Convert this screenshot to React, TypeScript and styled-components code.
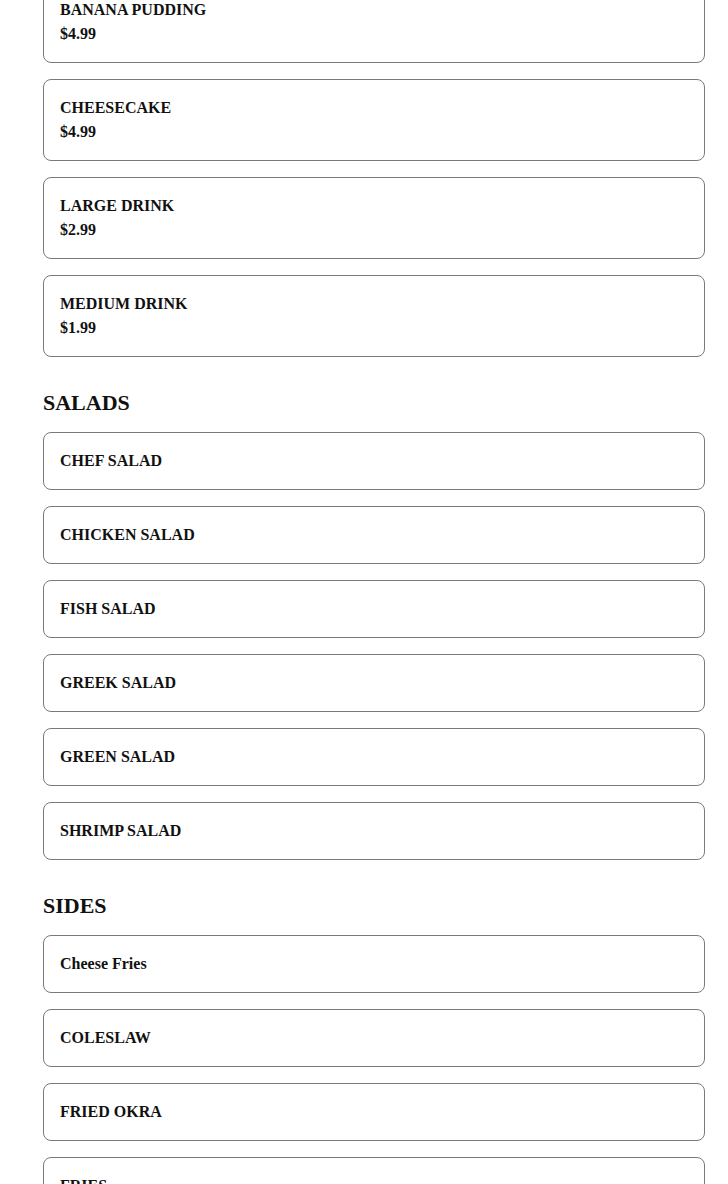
import styled, { createGlobalStyle } from 'styled-components';

type MenuItem = {
  name: string;
  price?: string;
};

type MenuSection = {
  title?: string;
  items: MenuItem[];
};

const MENU: MenuSection[] = [
  {
    items: [
      { name: 'BANANA PUDDING', price: '$4.99' },
      { name: 'CHEESECAKE', price: '$4.99' },
      { name: 'LARGE DRINK', price: '$2.99' },
      { name: 'MEDIUM DRINK', price: '$1.99' },
    ],
  },
  {
    title: 'SALADS',
    items: [
      { name: 'CHEF SALAD' },
      { name: 'CHICKEN SALAD' },
      { name: 'FISH SALAD' },
      { name: 'GREEK SALAD' },
      { name: 'GREEN SALAD' },
      { name: 'SHRIMP SALAD' },
    ],
  },
  {
    title: 'SIDES',
    items: [
      { name: 'Cheese Fries' },
      { name: 'COLESLAW' },
      { name: 'FRIED OKRA' },
      { name: 'FRIES' },
    ],
  },
];

const GlobalStyle = createGlobalStyle`
  html, body {
    margin: 0;
    padding: 0;
    background: #ffffff;
  }
  body {
    font-family: "Liberation Serif", "Times New Roman", serif;
    color: #111111;
    overflow: hidden;
  }
`;

export default function App() {
  return (
    <>
      <GlobalStyle />
      <Page>
        {MENU.map((section, i) => (
          <Section key={i}>
            {section.title && <SectionTitle>{section.title}</SectionTitle>}
            <ItemList>
              {section.items.map(item => (
                <ItemCard key={item.name}>
                  <ItemName>{item.name}</ItemName>
                  {item.price && <ItemPrice>{item.price}</ItemPrice>}
                </ItemCard>
              ))}
            </ItemList>
          </Section>
        ))}
      </Page>
    </>
  );
}

const Page = styled.main`
  display: flex;
  flex-direction: column;
  gap: 16px;
  padding: 0 23px 40px 43px;
  margin-top: -19px;
`;

const Section = styled.section`
  display: flex;
  flex-direction: column;
  gap: 11px;

  & + & {
    margin-top: 12px;
  }
`;

const SectionTitle = styled.h2`
  margin: 0;
  font-size: 22px;
  line-height: 36px;
  font-weight: bold;
  color: #111111;
`;

const ItemList = styled.ul`
  list-style: none;
  margin: 0;
  padding: 0;
  display: flex;
  flex-direction: column;
  gap: 16px;
`;

const ItemCard = styled.li`
  border: 1px solid #7a7a7a;
  border-radius: 8px;
  padding: 16px;
  display: flex;
  flex-direction: column;
`;

const ItemName = styled.span`
  font-size: 16px;
  line-height: 24px;
  font-weight: bold;
`;

const ItemPrice = styled.span`
  font-size: 16px;
  line-height: 24px;
  font-weight: bold;
`;
